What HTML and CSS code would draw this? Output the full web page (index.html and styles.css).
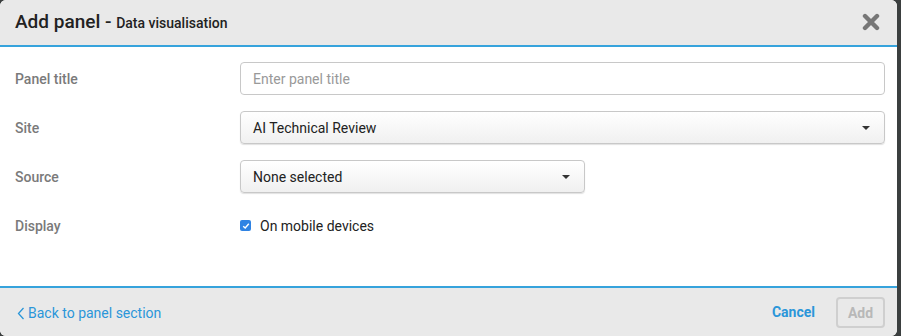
FILE: index.html
```html
<!DOCTYPE html>
<html lang="en">
<head>
    <meta charset="UTF-8">
    <title>Add panel</title>
    <link rel="stylesheet" href="styles.css">
</head>
<body>
    <div class="modal">
        <div class="modal-header">
            <h2>Add panel - <span class="sub">Data visualisation</span></h2>
            <span class="close">
                <svg width="18" height="18" viewBox="0 0 18 18"><path d="M3 3 L15 15 M15 3 L3 15" stroke="#777" stroke-width="4.4" stroke-linecap="round"/></svg>
            </span>
        </div>
        <div class="modal-body">
            <div class="row">
                <label>Panel title</label>
                <input class="field" type="text" placeholder="Enter panel title">
            </div>
            <div class="row">
                <label>Site</label>
                <div class="select">AI Technical Review <span class="caret"></span></div>
            </div>
            <div class="row">
                <label>Source</label>
                <div class="select short">None selected <span class="caret"></span></div>
            </div>
            <div class="row">
                <label>Display</label>
                <div class="check">
                    <span class="box">
                        <svg width="8" height="8" viewBox="0 0 8 8"><path d="M1.2 4.2 L3.2 6 L6.8 1.8" fill="none" stroke="#fff" stroke-width="1.4"/></svg>
                    </span>
                    On mobile devices
                </div>
            </div>
        </div>
        <div class="modal-footer">
            <a class="back">
                <svg width="8" height="13" viewBox="0 0 8 13"><path d="M6.5 1 L1.5 6.5 L6.5 12" fill="none" stroke="#2b96d9" stroke-width="1.3"/></svg>
                Back to panel section
            </a>
            <div class="actions">
                <a class="cancel">Cancel</a>
                <button class="add">Add</button>
            </div>
        </div>
    </div>
</body>
</html>
```

FILE: styles.css
```css
body {
    margin: 0;
    padding: 0;
    background: #3b3f3f;
    font-family: Roboto, "Liberation Sans", sans-serif;
}
.modal {
    width: 897px;
    height: 336px;
    background: #fff;
    border-radius: 6px;
    overflow: hidden;
    display: flex;
    flex-direction: column;
}
.modal-header {
    height: 45px;
    background: #e9e9e9;
    border-bottom: 2px solid #36a3dc;
    display: flex;
    align-items: center;
    justify-content: space-between;
    padding: 0 17px 0 15px;
}
.modal-header h2 {
    margin: 0;
    font-size: 19px;
    font-weight: 500;
    color: #222;
    padding-bottom: 2px;
}
.modal-header .sub {
    font-size: 14px;
    font-weight: 500;
}
.close {
    display: flex;
    margin-top: -1px;
}
.modal-body {
    flex: 1;
    padding: 15px 12px 0 15px;
}
.row {
    display: flex;
    align-items: center;
    margin-bottom: 16px;
}
.row label {
    width: 225px;
    font-size: 14px;
    font-weight: 500;
    color: #7a7a7a;
}
.field {
    flex: 1;
    height: 33px;
    box-sizing: border-box;
    border: 1px solid #c8c8c8;
    border-radius: 4px;
    padding: 0 12px;
    font-family: inherit;
    font-size: 14px;
    color: #333;
}
.field::placeholder {
    color: #999;
}
.select {
    flex: 1;
    height: 33px;
    box-sizing: border-box;
    border: 1px solid #c8c8c8;
    border-radius: 4px;
    background: linear-gradient(#fff, #f0f0f0);
    box-shadow: 0 1px 1px rgba(0, 0, 0, 0.12);
    padding: 0 12px;
    font-size: 14px;
    color: #222;
    display: flex;
    align-items: center;
    justify-content: space-between;
}
.select.short {
    flex: none;
    width: 345px;
}
.caret {
    width: 0;
    height: 0;
    border-left: 4px solid transparent;
    border-right: 4px solid transparent;
    border-top: 4px solid #333;
    margin-right: 2px;
}
.check {
    display: flex;
    align-items: center;
    font-size: 14px;
    color: #222;
    height: 33px;
}
.box {
    width: 11px;
    height: 11px;
    background: #2f83e3;
    border-radius: 2px;
    display: flex;
    align-items: center;
    justify-content: center;
    margin-right: 9px;
}
.modal-footer {
    height: 48px;
    background: #e9e9e9;
    border-top: 2px solid #36a3dc;
    display: flex;
    align-items: center;
    justify-content: space-between;
    padding: 0 12px 0 17px;
}
.back {
    color: #2b96d9;
    font-size: 14px;
    display: flex;
    align-items: center;
    gap: 3px;
    margin-top: 2px;
}
.actions {
    display: flex;
    align-items: center;
    gap: 21px;
}
.cancel {
    color: #2b96d9;
    font-size: 14px;
    font-weight: 700;
}
.add {
    width: 49px;
    height: 31px;
    border: 2px solid #cfcfcf;
    border-radius: 4px;
    background: transparent;
    font-family: inherit;
    font-size: 14px;
    font-weight: 700;
    color: #b8b8b8;
    margin-top: 1px;
}
```
